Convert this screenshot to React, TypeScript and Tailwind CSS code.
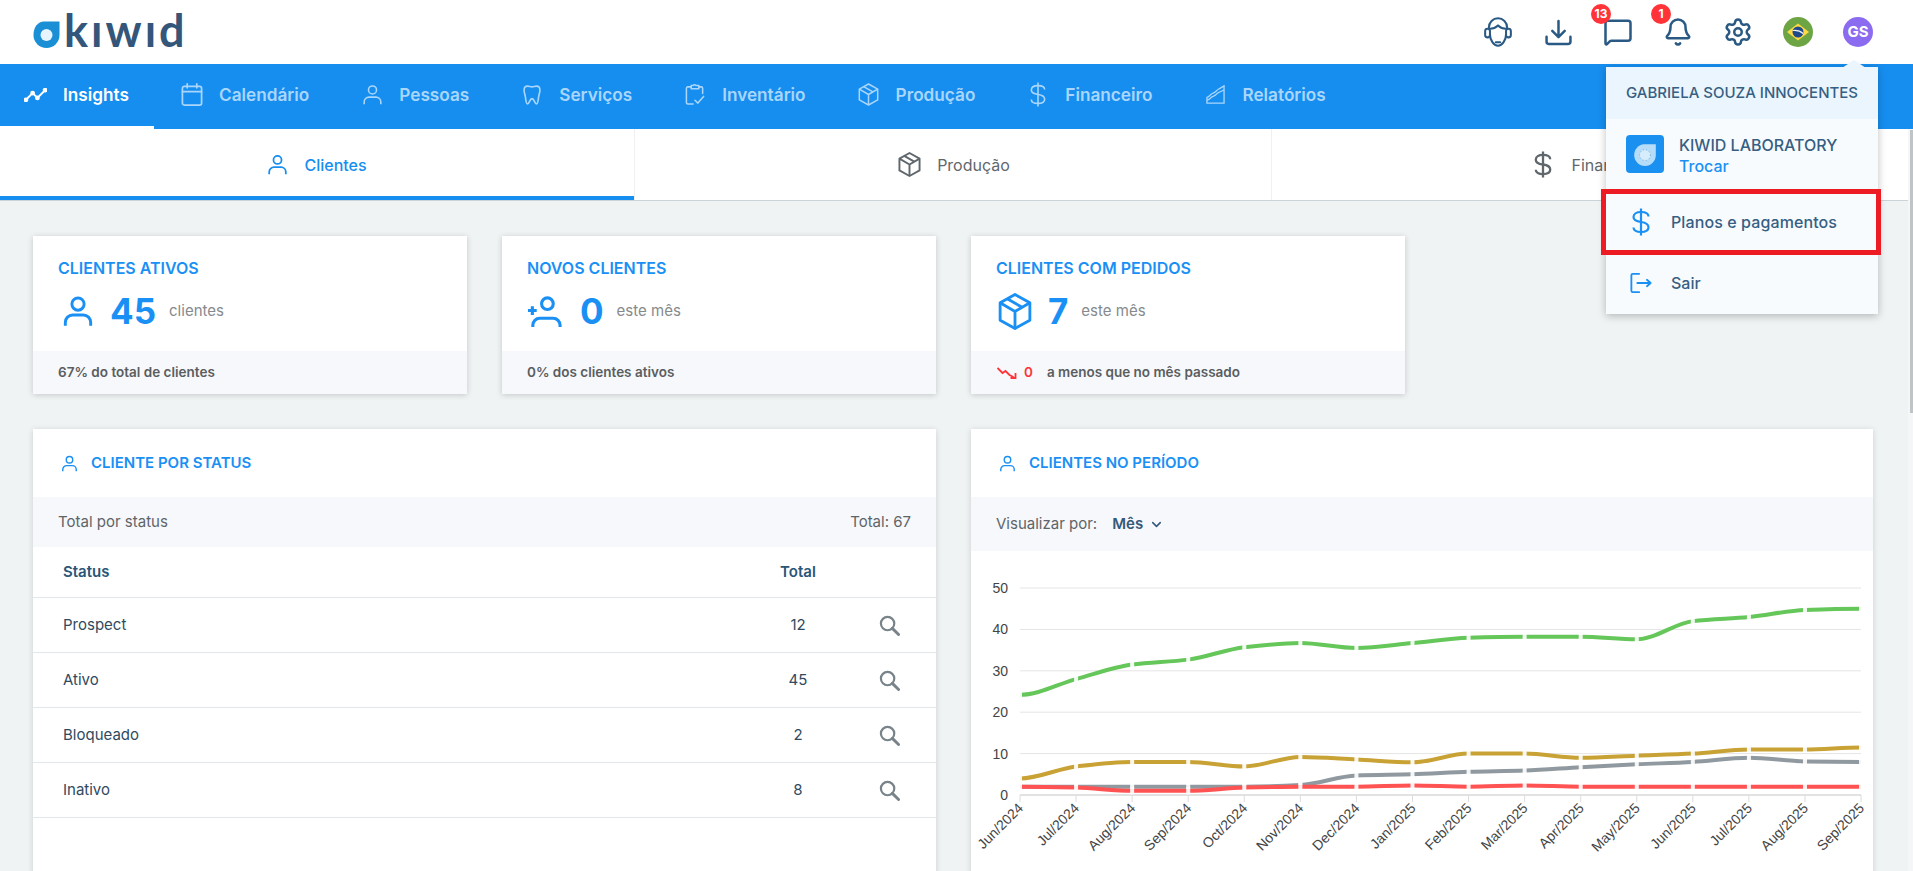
import { ReactNode } from "react";
import { Bell, ChevronDown, MessageSquare, Settings } from "lucide-react";

type IconProps = { className?: string; strokeWidth?: number };

function PersonIcon({ className, strokeWidth = 2 }: IconProps) {
  return (
    <svg viewBox="0 0 24 24" fill="none" stroke="currentColor" strokeWidth={strokeWidth} className={className}>
      <circle cx="12" cy="6.8" r="4.6" />
      <path d="M2.5 23v-2.5a5.5 5.5 0 0 1 5.5-5.5h8a5.5 5.5 0 0 1 5.5 5.5V23" />
    </svg>
  );
}

function PersonPlusIcon({ className }: IconProps) {
  return (
    <svg viewBox="0 0 36 32" fill="none" stroke="currentColor" strokeWidth="3.2" className={className}>
      <circle cx="21" cy="8" r="6" />
      <path d="M6 32v-2a7 7 0 0 1 7-7h14a7 7 0 0 1 7 7v2" />
      <path d="M1 15h9M5.5 10.5v9" />
    </svg>
  );
}

function InsightsIcon({ className }: IconProps) {
  return (
    <svg viewBox="0 0 24 14" fill="none" stroke="currentColor" strokeWidth="2" className={className}>
      <path d="M2 12l7-7 5 5 8-8" />
      <circle cx="2" cy="12" r="1.5" fill="currentColor" />
      <circle cx="9" cy="5" r="1.5" fill="currentColor" />
      <circle cx="14" cy="10" r="1.5" fill="currentColor" />
      <circle cx="22" cy="2" r="1.5" fill="currentColor" />
    </svg>
  );
}

function CalendarIcon({ className }: IconProps) {
  return (
    <svg viewBox="0 0 22 24" fill="none" stroke="currentColor" strokeWidth="1.8" strokeLinecap="round" className={className}>
      <rect x="1" y="3.5" width="20" height="19.5" rx="2" />
      <path d="M1 9h20M6 1v4M16 1v4" />
    </svg>
  );
}

function ToothIcon({ className }: IconProps) {
  return (
    <svg viewBox="0 0 20 22" fill="none" stroke="currentColor" strokeWidth="1.8" className={className}>
      <path d="M5 1.2c2 0 3 .8 5 .8s3-.8 5-.8c2.600 0 3.800 1.800 3.800 4.500 0 2.500-.8 4-1.300 6.500-.5 2.600-.7 8.800-2.500 8.800-1.900 0-2.500-6-5-6s-3.100 6-5 6c-1.800 0-2-6.200-2.500-8.800C2 9.700 1.200 8.200 1.200 5.700 1.200 3 2.400 1.200 5 1.200z" />
    </svg>
  );
}

function ClipboardIcon({ className }: IconProps) {
  return (
    <svg viewBox="0 0 20 22" fill="none" stroke="currentColor" strokeWidth="1.6" strokeLinecap="round" strokeLinejoin="round" className={className}>
      <path d="M6 3H2.500A1.500 1.500 0 0 0 1 4.500v15A1.500 1.500 0 0 0 2.500 21H8" />
      <path d="M14 3h2.500A1.500 1.500 0 0 1 18 4.500V10" />
      <path d="M6 1.500h2a2 2 0 0 1 3 0h3V5H6z" />
      <path d="M10 17l3 3 6-7" />
    </svg>
  );
}

function BoxIcon({ className, strokeWidth = 1.7 }: IconProps) {
  return (
    <svg viewBox="0 0 24 26" fill="none" stroke="currentColor" strokeWidth={strokeWidth} strokeLinejoin="round" className={className}>
      <path d="M12 1l10.500 5.800v12.400L12 25 1.500 19.200V6.800z" />
      <path d="M1.500 6.800L12 13l10.500-6.200M12 13v12" />
      <path d="M6.500 4l10.500 6" />
    </svg>
  );
}

function DollarIcon({ className, strokeWidth = 1.8 }: IconProps) {
  return (
    <svg viewBox="0 0 18 28" fill="none" stroke="currentColor" strokeWidth={strokeWidth} className={className}>
      <path d="M9 .5v27" />
      <path d="M16.500 8.500C16.500 5.500 13.500 4 9 4S1.500 5.800 1.500 9 4.500 13.400 9 14s7.500 2 7.500 5.300S13.500 24 9 24s-7.500-1.500-7.500-4.500" />
    </svg>
  );
}

function ReportIcon({ className }: IconProps) {
  return (
    <svg viewBox="0 0 20 20" fill="none" stroke="currentColor" strokeWidth="1.4" className={className}>
      <path d="M1 19v-6c3-.5 4-4 6.500-4.500S11 5.500 13 4.500 17 2 19 1v18z" />
      <path d="M1 16c3-.5 4-3.500 6.500-4S11 9 13 8s4-1.500 6-3" />
    </svg>
  );
}

function HeadsetIcon({ className }: IconProps) {
  return (
    <svg viewBox="0 0 28 28" fill="none" stroke="currentColor" strokeWidth="1.9" strokeLinecap="round" className={className}>
      <path d="M5.500 11V9.800C5.500 5 9.300 1.200 14 1.200S22.500 5 22.500 9.800V11" />
      <path d="M6.500 16c0 5.500 3.500 10.800 7.500 10.800S21.500 21.500 21.500 16" />
      <path d="M6.500 11c3.500 0 5.500-1 7.500-3 2 2 4 3 7.500 3" />
      <rect x="2" y="11" width="4.500" height="8" rx="2.200" />
      <rect x="21.500" y="11" width="4.500" height="8" rx="2.200" />
      <path d="M12 23.500h4" />
    </svg>
  );
}

function TrayDownloadIcon({ className }: IconProps) {
  return (
    <svg viewBox="0 0 26 26" fill="none" stroke="currentColor" strokeWidth="2.400" strokeLinecap="round" strokeLinejoin="round" className={className}>
      <path d="M13 2v15M7 11.500l6 6 6-6" />
      <path d="M1.500 17v5a2 2 0 0 0 2 2h19a2 2 0 0 0 2-2v-5" />
    </svg>
  );
}

function ExitIcon({ className }: IconProps) {
  return (
    <svg viewBox="0 0 24 24" fill="none" stroke="currentColor" strokeWidth="2" strokeLinecap="round" strokeLinejoin="round" className={className}>
      <path d="M10 2H3a1.500 1.500 0 0 0-1.500 1.500v17A1.500 1.500 0 0 0 3 22h7" />
      <path d="M8 12h14.500M18.500 8.500l4 3.500-4 3.500" />
    </svg>
  );
}

function SearchIcon({ className }: IconProps) {
  return (
    <svg viewBox="0 0 22 22" fill="none" stroke="currentColor" className={className}>
      <circle cx="9" cy="9" r="7" strokeWidth="2.300" />
      <path d="M14 14l6.500 6.500" strokeWidth="3" strokeLinecap="round" />
    </svg>
  );
}

function TrendDownIcon({ className }: IconProps) {
  return (
    <svg viewBox="0 0 20 12" fill="none" stroke="currentColor" strokeWidth="1.800" className={className}>
      <path d="M0.500 1l5 5 3-2 4 4 2 1 3 2" />
      <path d="M13.500 11h5V6" />
    </svg>
  );
}

function DropMark({ className }: IconProps) {
  return (
    <svg viewBox="2 0 27 27" className={className}>
      <path d="M13 0.500h15.500v13.500a13 13 0 1 1-26 0C2.500 6 7 0.500 13 0.500z" fill="#1a8fd6" />
      <circle cx="15.500" cy="14" r="6" fill="#e8f4fb" />
    </svg>
  );
}

function BrazilFlag() {
  return (
    <svg viewBox="0 0 30 30" className="h-[30px] w-[30px]">
      <circle cx="15" cy="15" r="15" fill="#6da544" />
      <path d="M15 6.500L26 15l-11 8.500L4 15z" fill="#ffda44" />
      <circle cx="15" cy="15" r="5.500" fill="#1f4a8c" />
      <path d="M9.800 13.500c3.500-.5 7.500.5 10.300 3" stroke="#f0f0f0" strokeWidth="1.200" fill="none" />
    </svg>
  );
}

const NAV_ITEMS = [
  { label: "Calendário", icon: <CalendarIcon className="h-[23px] w-[22px]" /> },
  { label: "Pessoas", icon: <PersonIcon className="h-[21px] w-[21px]" strokeWidth={1.8} /> },
  { label: "Serviços", icon: <ToothIcon className="h-[20px] w-[18px]" /> },
  { label: "Inventário", icon: <ClipboardIcon className="h-[21px] w-[20px]" /> },
  { label: "Produção", icon: <BoxIcon className="h-[23px] w-[21px]" /> },
  { label: "Financeiro", icon: <DollarIcon className="h-[25px] w-[16px]" /> },
  { label: "Relatórios", icon: <ReportIcon className="h-[19px] w-[19px]" /> },
];

const STATUS_ROWS = [
  { name: "Prospect", total: 12 },
  { name: "Ativo", total: 45 },
  { name: "Bloqueado", total: 2 },
  { name: "Inativo", total: 8 },
];

const MONTHS = [
  "Jun/2024", "Jul/2024", "Aug/2024", "Sep/2024", "Oct/2024", "Nov/2024", "Dec/2024", "Jan/2025",
  "Feb/2025", "Mar/2025", "Apr/2025", "May/2025", "Jun/2025", "Jul/2025", "Aug/2025", "Sep/2025",
];

const SERIES = [
  { color: "#65c65a", data: [24.2, 28, 31.5, 32.7, 35.7, 36.7, 35.5, 36.7, 38, 38.2, 38.2, 37.6, 42, 43, 44.7, 45] },
  { color: "#c9a235", data: [4, 6.9, 8, 8, 6.9, 9.2, 8.6, 7.9, 10, 10, 9, 9.5, 10, 11, 11, 11.5] },
  { color: "#8f999f", data: [2, 2, 2, 2, 2, 2.4, 4.7, 5, 5.6, 5.9, 6.7, 7.4, 8, 9, 8.1, 8] },
  { color: "#ff5252", data: [2, 1.8, 1, 1, 1.8, 2, 2, 2.3, 2, 2.3, 2, 2, 2, 2, 2, 2] },
];

// chart coordinates, local to the svg
const CHART_LEFT = 49;
const CHART_STEP = 56.07;
const CHART_ZERO = 244;
const UNIT = 4.14;

const px = (i: number) => CHART_LEFT + i * CHART_STEP;
const py = (v: number) => CHART_ZERO - v * UNIT;

function linePath(data: number[]) {
  const points = data.map((v, i) => [px(i), py(v)]);
  const slopes = points.map((p, i) => {
    if (i === 0 || i === points.length - 1) return 0;
    const a = (p[1] - points[i - 1][1]) / CHART_STEP;
    const b = (points[i + 1][1] - p[1]) / CHART_STEP;
    return a * b <= 0 ? 0 : (2 * a * b) / (a + b);
  });
  let d = `M${points[0][0]} ${points[0][1]}`;
  for (let i = 1; i < points.length; i++) {
    const dx = CHART_STEP / 3;
    d += `C${points[i - 1][0] + dx} ${points[i - 1][1] + slopes[i - 1] * dx} ${points[i][0] - dx} ${points[i][1] - slopes[i] * dx} ${points[i][0]} ${points[i][1]}`;
  }
  return d;
}

function LineChart() {
  return (
    <svg width="902" height="330" className="block">
      {[10, 20, 30, 40, 50].map((v) => (
        <line key={v} x1={CHART_LEFT} x2={890} y1={py(v)} y2={py(v)} stroke="#e5e5e5" strokeWidth="1" />
      ))}
      <line x1={CHART_LEFT} x2={890} y1={CHART_ZERO} y2={CHART_ZERO} stroke="#e2e2e2" strokeWidth="2" />
      {MONTHS.map((_, i) => (
        <line key={i} x1={px(i)} x2={px(i)} y1={CHART_ZERO} y2={CHART_ZERO + 7} stroke="#dcdcdc" />
      ))}
      {[0, 10, 20, 30, 40, 50].map((v) => (
        <text key={v} x={37} y={py(v) + 5} textAnchor="end" fontSize="14" fill="#444" fontFamily="Liberation Sans, Arial, sans-serif">
          {v}
        </text>
      ))}
      {MONTHS.map((m, i) => (
        <text
          key={m + i}
          transform={`translate(${px(i) + 4} ${CHART_ZERO + 14}) rotate(-45)`}
          textAnchor="end"
          fontSize="14"
          fill="#444"
          fontFamily="Liberation Sans, Arial, sans-serif"
        >
          {m}
        </text>
      ))}
      {SERIES.map((s) => (
        <g key={s.color}>
          <path d={linePath(s.data)} fill="none" stroke={s.color} strokeWidth="4" />
          {s.data.map((v, i) => (
            <rect key={i} x={px(i) - 2} y={py(v) - 3.500} width="4" height="7" fill="#fff" opacity="0.9" />
          ))}
        </g>
      ))}
    </svg>
  );
}

function StatCard({
  title,
  icon,
  value,
  unit,
  footer,
}: {
  title: string;
  icon: ReactNode;
  value: string;
  unit: string;
  footer: ReactNode;
}) {
  return (
    <div className="w-[434px] bg-white shadow-[0_1px_6px_rgba(0,0,0,0.18)]">
      <div className="h-[115px] px-[25px] pt-[22px]">
        <div className="text-[16px] leading-5 font-semibold text-[#1a90f5]">{title}</div>
        <div className="mt-[13px] flex items-center text-[#1a90f5]">
          {icon}
          <span className="text-[35px] leading-[40px] font-bold">{value}</span>
          <span className="ml-[13px] text-[15px] text-[#868a8d]">{unit}</span>
        </div>
      </div>
      <div className="flex h-[43px] items-center bg-[#f6f8fb] px-[25px] text-[13.5px] font-semibold text-[#5a5d60]">
        {footer}
      </div>
    </div>
  );
}

function PanelTitle({ children }: { children: ReactNode }) {
  return (
    <div className="flex h-[68px] items-center gap-[13px] pl-[28px] text-[15px] font-semibold text-[#1a90f5]">
      <PersonIcon className="h-[17px] w-[17px]" strokeWidth={2} />
      {children}
    </div>
  );
}

function UserMenu() {
  return (
    <div className="absolute top-[67px] left-[1606px] z-20 w-[272px] bg-[#f8fbfe] text-[#365f83] shadow-[0_2px_8px_rgba(0,0,0,0.25)]">
      <div className="absolute -top-[7px] right-[12px] h-0 w-0 border-x-[12px] border-b-[8px] border-x-transparent border-b-[#ebf5fd]" />
      <div className="flex h-[52px] items-center bg-[#ebf5fd] pl-[20px] text-[15px] font-medium whitespace-nowrap">
        GABRIELA SOUZA INNOCENTES
      </div>
      <div className="flex h-[70px] items-center pl-[20px]">
        <div className="flex h-[38px] w-[38px] items-center justify-center rounded bg-[#1a90f0]">
          <svg viewBox="0 0 24 24" className="h-[26px] w-[26px]">
            <path d="M11 3h11v10a10 10 0 1 1-20 0C2 8 6 3 11 3z" fill="#b5dcf8" />
            <circle cx="12" cy="13" r="5" fill="#d8edfb" stroke="#5fa9d9" strokeWidth="0.800" strokeDasharray="1 2" />
          </svg>
        </div>
        <div className="ml-[15px] pt-[2px]">
          <div className="text-[16px] leading-5 font-medium">KIWID LABORATORY</div>
          <div className="mt-[1px] text-[16px] leading-5 font-medium text-[#1a90f5]">Trocar</div>
        </div>
      </div>
      <div className="flex h-[66px] items-center pl-[26px] text-[16px] font-medium">
        <DollarIcon className="h-[30px] w-[18px] text-[#1a90f5]" strokeWidth={2.200} />
        <span className="ml-[21px] tracking-[0.1px]">Planos e pagamentos</span>
      </div>
      <div className="flex h-[59px] items-center pb-[4px] pl-[24px] text-[16px] font-medium">
        <ExitIcon className="h-[24px] w-[22px] text-[#1a90f5]" />
        <span className="ml-[19px]">Sair</span>
      </div>
      <div className="absolute top-[122px] -left-[5px] h-[66px] w-[280px] border-[5px] border-[#ed1c24]" />
    </div>
  );
}

export default function App() {
  return (
    <div className="relative h-screen overflow-hidden bg-white font-[Inter,sans-serif]">
      <header className="flex h-16 items-center justify-between pr-[25px]">
        <div className="flex items-center pl-[33px]" aria-label="kiwid">
          <DropMark className="mt-[4px] h-[27px] w-[27px]" />
          <span className="mb-[4px] ml-[4px] font-[Lato,sans-serif] text-[45px] leading-[40px] font-bold tracking-[3px] text-[#33567a]">
            kıwıd
          </span>
        </div>
        <div className="flex items-center text-[#2a5a84]">
          <div className="flex w-[60px] justify-center">
            <HeadsetIcon className="h-[30px] w-[30px]" />
          </div>
          <div className="flex w-[60px] justify-center">
            <TrayDownloadIcon className="h-[27px] w-[27px]" />
          </div>
          <div className="relative flex w-[60px] justify-center">
            <MessageSquare className="h-[30px] w-[30px]" strokeWidth={2} />
            <span className="absolute -top-[13px] left-[3px] flex h-5 w-5 items-center justify-center rounded-full bg-[#ff3338] text-[12px] font-bold text-white">
              13
            </span>
          </div>
          <div className="relative flex w-[60px] justify-center">
            <Bell className="h-[30px] w-[30px]" strokeWidth={2} />
            <span className="absolute -top-[13px] left-[3px] flex h-5 w-5 items-center justify-center rounded-full bg-[#ff3338] text-[12px] font-bold text-white">
              1
            </span>
          </div>
          <div className="flex w-[60px] justify-center">
            <Settings className="h-[30px] w-[30px]" strokeWidth={2} />
          </div>
          <div className="flex w-[60px] justify-center">
            <BrazilFlag />
          </div>
          <div className="flex w-[60px] justify-center">
            <div className="flex h-[30px] w-[30px] items-center justify-center rounded-full bg-[#8b6cf0] text-[15px] font-bold text-white">
              GS
            </div>
          </div>
        </div>
      </header>

      <nav className="flex h-[65px] items-stretch bg-[#168ef0] text-[17.2px] font-semibold text-[#aad6fb]">
        <div className="mr-[1px] flex w-[154px] items-center gap-[16px] border-b-[3px] border-white pb-[1px] pl-[24px] text-white">
          <InsightsIcon className="h-[14px] w-[23px]" />
          Insights
        </div>
        {NAV_ITEMS.map((item) => (
          <div key={item.label} className="flex items-center gap-[16px] px-[26px] pb-[4px]">
            <span className="flex w-[22px] justify-center">{item.icon}</span>
            {item.label}
          </div>
        ))}
      </nav>

      <div className="flex">
        <div className="w-[1908px]">
          <div className="grid h-[72px] grid-cols-[634px_637px_1fr] border-b border-[#ccd3d6] bg-white text-[16px] text-[#5f676d]">
            <div className="flex items-center justify-center gap-[16px] border-b-[4px] border-[#168ef0] pt-[4px] font-medium text-[#168ef0]">
              <PersonIcon className="h-[21px] w-[21px]" />
              Clientes
            </div>
            <div className="flex items-center justify-center gap-[16px] border-l border-[#eef1f3] pl-[2px]">
              <BoxIcon className="h-[25px] w-[23px]" strokeWidth={2} />
              Produção
            </div>
            <div className="flex items-center justify-center gap-[20px] border-l border-[#eef1f3] pl-[4px]">
              <DollarIcon className="h-[27px] w-[18px]" strokeWidth={2.400} />
              Financeiro
            </div>
          </div>
          <main className="h-[800px] bg-[#eff3f4] pt-[35px] pl-[33px]">
            <div className="flex gap-[35px]">
              <StatCard
                title="CLIENTES ATIVOS"
                icon={<PersonIcon className="mr-[16px] ml-[4px] h-[32px] w-[32px]" strokeWidth={2.200} />}
                value="45"
                unit="clientes"
                footer="67% do total de clientes"
              />
              <StatCard
                title="NOVOS CLIENTES"
                icon={<PersonPlusIcon className="mr-[18px] h-[33px] w-[35px]" />}
                value="0"
                unit="este mês"
                footer="0% dos clientes ativos"
              />
              <StatCard
                title="CLIENTES COM PEDIDOS"
                icon={<BoxIcon className="mr-[16px] ml-[2px] h-[37px] w-[34px]" strokeWidth={2} />}
                value="7"
                unit="este mês"
                footer={
                  <>
                    <TrendDownIcon className="ml-[1px] h-[12px] w-[20px] text-[#ff3338]" />
                    <span className="ml-[7px] text-[#ff3338]">0</span>
                    <span className="ml-[14px]">a menos que no mês passado</span>
                  </>
                }
              />
            </div>
            <div className="mt-[35px] flex gap-[35px]">
              <section className="h-[500px] w-[903px] bg-white shadow-[0_1px_6px_rgba(0,0,0,0.15)]">
                <PanelTitle>CLIENTE POR STATUS</PanelTitle>
                <div className="flex h-[50px] items-center justify-between bg-[#f6f8fb] px-[25px] text-[15px] text-[#5f6468]">
                  <span>Total por status</span>
                  <span>Total: 67</span>
                </div>
                <div className="flex h-[51px] items-center border-b border-[#e2e7eb] text-[15px] font-semibold text-[#2a5678]">
                  <span className="flex-1 pl-[30px]">Status</span>
                  <span className="w-[70px] text-center">Total</span>
                  <span className="w-[103px]" />
                </div>
                {STATUS_ROWS.map((row) => (
                  <div key={row.name} className="flex h-[55px] items-center border-b border-[#e2e7eb] text-[15px] text-[#2f4a60]">
                    <span className="flex-1 pl-[30px]">{row.name}</span>
                    <span className="w-[70px] text-center">{row.total}</span>
                    <span className="flex w-[103px] justify-center pl-[9px] text-[#78838a]">
                      <SearchIcon className="h-[21px] w-[21px]" />
                    </span>
                  </div>
                ))}
              </section>
              <section className="h-[500px] w-[902px] bg-white shadow-[0_1px_6px_rgba(0,0,0,0.15)]">
                <PanelTitle>CLIENTES NO PERÍODO</PanelTitle>
                <div className="flex h-[54px] items-center bg-[#f6f8fb] pl-[25px] text-[15px] text-[#5f6468]">
                  <span>Visualizar por:</span>
                  <span className="ml-[15px] font-semibold text-[#35597a]">Mês</span>
                  <ChevronDown className="ml-[6px] h-[15px] w-[15px] text-[#35597a]" strokeWidth={2.500} />
                </div>
                <LineChart />
              </section>
            </div>
          </main>
        </div>
        <div className="flex-1 bg-[#f4f6f7] pl-[2px]">
          <div className="mt-[1px] h-[283px] bg-[#bfc5c6]" />
        </div>
      </div>

      <UserMenu />
    </div>
  );
}
